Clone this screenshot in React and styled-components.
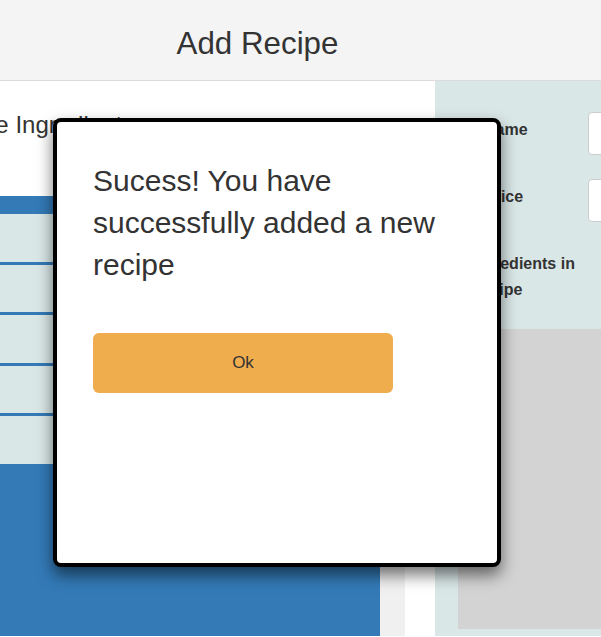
import React from "react";
import styled, { createGlobalStyle } from "styled-components";

const GlobalStyle = createGlobalStyle`
  body {
    margin: 0;
    font-family: "Liberation Sans", Arial, sans-serif;
    color: #333;
    overflow: hidden;
  }
`;

const rows = [1, 2, 3, 4, 5];

const App = () => {
  return (
    <Page>
      <GlobalStyle />
      <Header>
        <Title>Add Recipe</Title>
      </Header>
      <Body>
        <LeftColumn>
          <SectionTitle>Recipe Ingredients</SectionTitle>
          <Table>
            <TableHead />
            {rows.map((r) => (
              <TableRow key={r} last={r === rows.length} />
            ))}
          </Table>
          <Lower>
            <BlueBlock />
            <Track />
          </Lower>
        </LeftColumn>
        <RightColumn>
          <Form>
            <Label inset={26}>Name</Label>
            <Input />
            <Label inset={26}>Price</Label>
            <Input />
            <Label inset={12}>Ingredients in Recipe</Label>
          </Form>
          <Preview />
        </RightColumn>
      </Body>

      <Modal>
        <Message>Sucess! You have successfully added a new recipe</Message>
        <OkButton>Ok</OkButton>
      </Modal>
    </Page>
  );
};

export default App;

const Page = styled.div`
  position: relative;
  width: 601px;
  height: 637px;
  overflow: hidden;
  background: #fff;
`;
const Header = styled.div`
  height: 81px;
  display: flex;
  justify-content: center;
  align-items: center;
  padding: 8px 86px 0 0;
  box-sizing: border-box;
  background-color: #f4f4f4;
  border-bottom: 1px solid #dcdcdc;
`;
const Title = styled.div`
  font-size: 31.3px;
  color: #333;
`;
const Body = styled.div`
  display: flex;
  height: 555px;
`;
const LeftColumn = styled.div`
  flex: 0 0 435px;
  display: flex;
  flex-direction: column;
  padding-top: 30px;
  box-sizing: border-box;
  background: #fff;
  overflow: hidden;
`;
const SectionTitle = styled.div`
  font-size: 24px;
  margin-left: -66px;
  white-space: nowrap;
  color: #333;
`;
const Table = styled.div`
  width: 380px;
  margin-top: 57px;
  display: flex;
  flex-direction: column;
`;
const TableHead = styled.div`
  height: 18px;
  background-color: #337ab7;
`;
const TableRow = styled.div`
  height: 47.5px;
  background-color: #dae7e7;
  border-bottom: ${(p) => (p.last ? "0" : "3px solid #337ab7")};
`;
const Lower = styled.div`
  flex: 1;
  display: flex;
`;
const BlueBlock = styled.div`
  flex: 0 0 380px;
  background-color: #337ab7;
`;
const Track = styled.div`
  flex: 0 0 25px;
  background-color: #f0f0f0;
`;
const RightColumn = styled.div`
  flex: 0 0 420px;
  background-color: #dae7e7;
  padding: 31px 0 0 23px;
  box-sizing: border-box;
`;
const Form = styled.div`
  display: grid;
  grid-template-columns: 130px 200px;
  row-gap: 24px;
`;
const Label = styled.div`
  padding: 5px 0 0 ${(p) => p.inset}px;
  font-size: 16px;
  font-weight: bold;
  line-height: 26px;
  color: #333;
`;
const Input = styled.div`
  height: 43px;
  box-sizing: border-box;
  background: #fff;
  border: 1px solid #ccc;
  border-radius: 4px;
`;
const Preview = styled.div`
  margin-top: 26px;
  height: 300px;
  width: 400px;
  background-color: #d3d3d3;
`;
const Modal = styled.div`
  position: absolute;
  left: 53px;
  top: 118px;
  width: 448px;
  height: 449px;
  box-sizing: border-box;
  padding: 38px 36px;
  background: #fff;
  border: 4px solid #000;
  border-radius: 8px;
  box-shadow: 0 8px 16px rgba(0, 0, 0, 0.55);
`;
const Message = styled.div`
  font-size: 30px;
  line-height: 42px;
  color: #333;
`;
const OkButton = styled.button`
  margin-top: 47px;
  width: 300px;
  height: 60px;
  border: 0;
  border-radius: 6px;
  background-color: #f0ad4e;
  color: #333;
  font-family: "Liberation Sans", Arial, sans-serif;
  font-size: 17px;
  cursor: pointer;
`;
